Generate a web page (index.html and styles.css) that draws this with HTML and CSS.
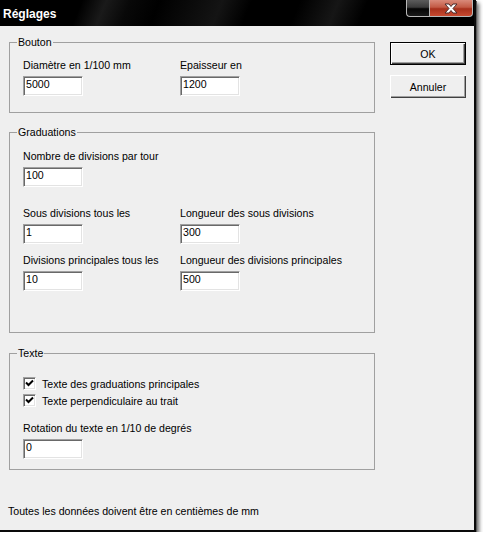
FILE: index.html
```html
<!DOCTYPE html>
<html lang="fr">
<head>
<meta charset="utf-8">
<title>Réglages</title>
<link rel="stylesheet" href="styles.css">
</head>
<body>
<div class="window">
  <div class="titlebar">
    <span class="title">Réglages</span>
    <div class="caption-btns">
      <span class="cap min"></span>
      <span class="cap close">
        <svg width="18" height="11" viewBox="0 0 18 11"><path d="M3 1 L7 1 L9 3.5 L11 1 L15 1 L11 5.5 L15 10 L11 10 L9 7.5 L7 10 L3 10 L7 5.5 Z" fill="#fff" stroke="#4a2a2a" stroke-width="1" stroke-linejoin="round"/></svg>
      </span>
    </div>
  </div>
  <div class="client">
    <div class="main">
      <div class="groups">
        <fieldset class="group">
          <legend>Bouton</legend>
          <div class="gbody bouton">
            <div class="cols">
              <div class="field"><div class="lbl">Diamètre en 1/100 mm</div><div class="edit">5000</div></div>
              <div class="field"><div class="lbl">Epaisseur en</div><div class="edit">1200</div></div>
            </div>
          </div>
        </fieldset>
        <fieldset class="group grads">
          <legend>Graduations</legend>
          <div class="gbody grads-body">
            <div class="field"><div class="lbl">Nombre de divisions par tour</div><div class="edit">100</div></div>
            <div class="cols r2">
              <div class="field"><div class="lbl">Sous divisions tous les</div><div class="edit">1</div></div>
              <div class="field"><div class="lbl">Longueur des sous divisions</div><div class="edit">300</div></div>
            </div>
            <div class="cols r3">
              <div class="field"><div class="lbl">Divisions principales tous les</div><div class="edit">10</div></div>
              <div class="field"><div class="lbl">Longueur des divisions principales</div><div class="edit">500</div></div>
            </div>
          </div>
        </fieldset>
        <fieldset class="group texte">
          <legend>Texte</legend>
          <div class="gbody texte-body">
            <div class="check"><span class="cbx"><svg width="9" height="9" viewBox="0 0 9 9"><path d="M1 3.5 L3.5 6 L8 1.5" fill="none" stroke="#000" stroke-width="2"/></svg></span><span>Texte des graduations principales</span></div>
            <div class="check"><span class="cbx"><svg width="9" height="9" viewBox="0 0 9 9"><path d="M1 3.5 L3.5 6 L8 1.5" fill="none" stroke="#000" stroke-width="2"/></svg></span><span>Texte perpendiculaire au trait</span></div>
            <div class="field rot"><div class="lbl">Rotation du texte en 1/10 de degrés</div><div class="edit">0</div></div>
          </div>
        </fieldset>
      </div>
      <div class="buttons">
        <button class="btn default">OK</button>
        <button class="btn">Annuler</button>
      </div>
    </div>
    <p class="note">Toutes les données doivent être en centièmes de mm</p>
  </div>
</div>
</body>
</html>
```
FILE: styles.css
```css
html, body {
  margin: 0;
  padding: 0;
}
body {
  background: #ffffff;
  font-family: "Liberation Sans", Arial, sans-serif;
  font-size: 10.6px;
  color: #000;
}
.window {
  width: 474px;
  height: 530px;
  display: flex;
  flex-direction: column;
  background: #efefef;
  border-right: 2px solid #0a0a0a;
  border-bottom: 2px solid #0a0a0a;
  box-shadow: 1px 1px 0 #5a5a5a, 3px 3px 4px rgba(0, 0, 0, 0.6);
}
.titlebar {
  height: 26px;
  flex: none;
  display: flex;
  align-items: flex-start;
  background: linear-gradient(112deg, #000 0%, #000 17%, #1a1a1a 22%, #080808 27%, #000 33%, #141414 46%, #000 52%, #000 62%, #161616 70%, #000 76%, #000 100%);
}
.title {
  margin: 7px 0 0 3px;
  font-size: 12px;
  line-height: 14px;
  font-weight: bold;
  color: #fff;
}
.caption-btns {
  margin-left: auto;
  margin-right: 1px;
  display: flex;
}
.cap {
  height: 17px;
  box-sizing: border-box;
  border: 1px solid #b8b8b8;
  border-top: none;
  display: flex;
  align-items: center;
  justify-content: center;
}
.cap.min {
  width: 23px;
  border-right: none;
  border-radius: 0 0 0 4px;
  background: linear-gradient(#5c5c5c 0%, #3a3a3a 45%, #050505 55%, #1a1a1a 100%);
}
.cap.close {
  width: 44px;
  border-radius: 0 0 4px 0;
  background: linear-gradient(#d98a7a 0%, #c35a45 45%, #a8301c 55%, #c84a30 100%);
}
.client {
  flex: 1;
  padding: 10px 0 0 9px;
}
.main {
  display: flex;
  gap: 15px;
}
.groups {
  width: 366px;
}
.group {
  margin: 0;
  padding: 0;
  border: 1px solid #a0a0a0;
  min-width: 0;
}
.group legend {
  margin-left: 7px;
  padding: 0 1px;
  line-height: 13px;
}
.grads {
  margin-top: 13px;
}
.texte {
  margin-top: 14px;
}
.gbody {
  padding-left: 13px;
}
.bouton {
  padding-top: 10px;
  padding-bottom: 16px;
}
.grads-body {
  padding-top: 11px;
  padding-bottom: 41px;
}
.texte-body {
  padding-top: 15px;
  padding-bottom: 10px;
}
.cols {
  display: grid;
  grid-template-columns: 157px 1fr;
}
.r2 {
  margin-top: 20px;
}
.r3 {
  margin-top: 10px;
}
.lbl {
  line-height: 13px;
  height: 13px;
  margin-bottom: 4px;
  white-space: nowrap;
}
.edit {
  width: 60px;
  height: 20px;
  box-sizing: border-box;
  background: #fff;
  border-top: 1px solid #a0a0a0;
  border-left: 1px solid #a0a0a0;
  border-right: 1px solid #fff;
  border-bottom: 1px solid #fff;
  box-shadow: inset 1px 1px 0 #696969, inset -1px -1px 0 #e3e3e3;
  padding: 1px 0 0 2px;
  line-height: 12px;
}
.check {
  display: flex;
  align-items: center;
  height: 17px;
}
.cbx {
  width: 13px;
  height: 13px;
  box-sizing: border-box;
  margin-right: 6px;
  background: #fff;
  border-top: 1px solid #a0a0a0;
  border-left: 1px solid #a0a0a0;
  border-right: 1px solid #fff;
  border-bottom: 1px solid #fff;
  box-shadow: inset 1px 1px 0 #696969, inset -1px -1px 0 #e3e3e3;
  display: flex;
  align-items: center;
  justify-content: center;
}
.rot {
  margin-top: 13px;
}
.buttons {
  margin-top: 6px;
  display: flex;
  flex-direction: column;
  gap: 10px;
}
.btn {
  width: 76px;
  height: 23px;
  box-sizing: border-box;
  margin: 0;
  padding: 0;
  font-family: "Liberation Sans", Arial, sans-serif;
  font-size: 10.6px;
  color: #000;
  background: #efefef;
  border: none;
  box-shadow: inset 1px 1px 0 #fff, inset -1px -1px 0 #404040, inset -2px -2px 0 #a0a0a0;
}
.btn.default {
  border: 1px solid #000;
}
.note {
  margin: 35px 0 0 -1px;
  line-height: 13px;
}
```
